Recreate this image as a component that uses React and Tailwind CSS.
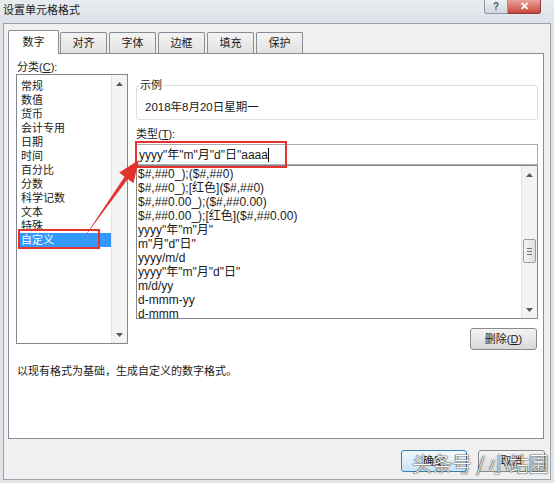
const categories = ['常规', '数值', '货币', '会计专用', '日期', '时间', '百分比', '分数', '科学记数', '文本', '特殊', '自定义']
const formats = [
  '$#,##0_);($#,##0)',
  '$#,##0_);[红色]($#,##0)',
  '$#,##0.00_);($#,##0.00)',
  '$#,##0.00_);[红色]($#,##0.00)',
  'yyyy"年"m"月"',
  'm"月"d"日"',
  'yyyy/m/d',
  'yyyy"年"m"月"d"日"',
  'm/d/yy',
  'd-mmm-yy',
  'd-mmm'
]
const tabs = ['数字', '对齐', '字体', '边框', '填充', '保护']

function Tri({ down }) {
  return (
    <svg width="7" height="4" viewBox="0 0 7 4">
      <path d={down ? 'M0 0 L7 0 L3.5 4Z' : 'M0 4 L3.5 0 L7 4Z'} fill="#5a5a5a" />
    </svg>
  )
}

function ScrollBar({ thumbTop }) {
  return (
    <div className="w-[16px] h-full bg-[#f3f3f3] border-l border-[#e3e3e3] flex flex-col">
      <div className="h-[17px] flex items-center justify-center"><Tri /></div>
      <div className="flex-1 flex flex-col items-center">
        {thumbTop != null && (
          <div
            className="w-[13px] h-[24px] rounded-[2px] border border-[#9b9b9b] bg-linear-to-r from-[#f4f4f4] to-[#dedede] flex flex-col items-center justify-center gap-[2px]"
            style={{ marginTop: thumbTop }}
          >
            <div className="w-[5px] h-px bg-[#777]" />
            <div className="w-[5px] h-px bg-[#777]" />
            <div className="w-[5px] h-px bg-[#777]" />
          </div>
        )}
      </div>
      <div className="h-[17px] flex items-center justify-center"><Tri down /></div>
    </div>
  )
}

function WinButton({ children, primary, className }) {
  const look = primary
    ? 'border-[#3c7fb1] bg-linear-to-b from-[#f2f9fd] to-[#c9e4f5]'
    : 'border-[#8a8a8a] bg-linear-to-b from-[#f4f4f4] to-[#d9d9d9]'
  return (
    <div className={`h-[22px] flex items-center justify-center rounded-[3px] border text-[11px] ${look} ${className}`}>
      {children}
    </div>
  )
}

export default function App() {
  return (
    <div className="relative w-[554px] h-[483px] overflow-hidden bg-[#dfe4e9] text-[#1a1a1a] font-['Liberation_Sans','Noto_Sans_CJK_SC',sans-serif]">
      {/* title bar */}
      <div className="h-[23px] flex justify-between bg-linear-to-b from-[#e9edf1] to-[#dce2e8]">
        <div className="pl-[3px] pt-[3px] text-[11px] leading-[14px]">设置单元格格式</div>
        <div className="flex pr-[13px] items-start">
          <div className="w-[24px] h-[14px] rounded-bl-[3px] border border-t-0 border-[#8c96a0] bg-linear-to-b from-[#eef1f4] to-[#cfd6dd] flex items-center justify-center text-[10px] leading-none text-[#555] font-bold">?</div>
          <div className="w-[33px] h-[14px] rounded-br-[3px] border border-t-0 border-l-0 border-[#8c3a3a] bg-linear-to-b from-[#e8a49a] to-[#c8453a] flex items-center justify-center text-[11px] leading-none text-white font-bold">✕</div>
        </div>
      </div>

      {/* dialog body */}
      <div className="ml-[3px] w-[548px] h-[457px] border border-[#9aa3ab] bg-[#f0f0f0]">
        {/* tabs */}
        <div className="pt-[6px] pl-[4px] flex items-end h-[29px]">
          {tabs.map((t, i) =>
            i === 0 ? (
              <div key={t} className="relative z-10 w-[51px] h-[24px] -mb-px bg-white border border-b-0 border-[#898c95] rounded-t-[2px] flex items-center justify-center text-[11px]">
                {t}
              </div>
            ) : (
              <div key={t} className={`w-[47px] h-[21px] border border-b-0 border-[#898c95] rounded-t-[2px] bg-linear-to-b from-[#f3f3f3] to-[#e2e2e2] flex items-center justify-center text-[11px] ${i === 1 ? 'ml-[1px]' : 'ml-[2px]'}`}>
                {t}
              </div>
            )
          )}
        </div>

        {/* tab page */}
        <div className="ml-[4px] w-[536px] h-[386px] border border-[#898c95] bg-white pt-[6px] pl-[7px]">
          <div className="ml-[1px] h-[14px] text-[11px] leading-[14px]">
            分类(<span className="underline">C</span>):
          </div>
          <div className="flex items-start">
            {/* category list */}
            <div className="w-[112px] h-[270px] border border-[#828790] flex">
              <div className="flex-1 pt-[4px]">
                {categories.map((c) => (
                  <div
                    key={c}
                    className={`ml-[1px] pl-[3px] h-[14px] leading-[14px] text-[11px] ${c === '自定义' ? 'bg-[#3399ff] text-white' : ''}`}
                  >
                    {c}
                  </div>
                ))}
              </div>
              <ScrollBar />
            </div>

            {/* right column */}
            <div className="ml-[8px] w-[402px] flex flex-col">
              <div className="relative mt-[11px] h-[35px] border border-[#d5dfe5] rounded-[3px] pt-[14px] pl-[8px]">
                <div className="absolute left-[2px] -top-[8px] bg-white px-[1px] text-[11px] leading-[14px]">示例</div>
                <div className="text-[11.5px] leading-[14px]">2018年8月20日星期一</div>
              </div>
              <div className="mt-[7px] h-[14px] text-[11px] leading-[14px]">
                类型(<span className="underline">T</span>):
              </div>
              <div className="mt-[3px] h-[21px] border border-[#abadb3] pl-[2px] flex items-center text-[12px]">
                yyyy"年"m"月"d"日"aaaa<span className="w-px h-[14px] bg-black" />
              </div>
              <div className="h-[154px] border border-[#828790] flex">
                <div className="flex-1 pl-[1px] pt-[1px]">
                  {formats.map((f) => (
                    <div key={f} className="h-[14px] leading-[14px] text-[12px] whitespace-nowrap">
                      {f}
                    </div>
                  ))}
                </div>
                <ScrollBar thumbTop={56} />
              </div>
              <div className="mt-[9px] flex justify-end pr-[1px]">
                <WinButton className="w-[67px]">
                  删除(<span className="underline">D</span>)
                </WinButton>
              </div>
            </div>
          </div>
          <div className="mt-[14px] ml-[1px] text-[11px] leading-[14px]">
            以现有格式为基础，生成自定义的数字格式。
          </div>
        </div>

        {/* bottom buttons */}
        <div className="mt-[11px] flex justify-end pr-[5px] gap-[11px]">
          <WinButton primary className="w-[66px]">确定</WinButton>
          <WinButton className="w-[67px]">取消</WinButton>
        </div>
      </div>

      {/* annotations */}
      <div className="absolute left-[18px] top-[229px] w-[82px] h-[20px] border-2 border-[#e5322d]" />
      <div className="absolute left-[135px] top-[141px] w-[152px] h-[27px] border-2 border-[#e5322d]" />
      <svg className="absolute left-0 top-0 pointer-events-none" width="554" height="483" viewBox="0 0 554 483">
        <path d="M83 239 L124.6 176.7 L119.2 172.6 L139 160 L133.4 183.2 L127.8 179.1 Z" fill="#e5322d" />
      </svg>

      {/* watermark */}
      <div className="absolute left-[412px] top-[452px] text-[20px] leading-[24px] text-white font-light whitespace-nowrap font-['Noto_Sans_CJK_SC',sans-serif] [text-shadow:0_0_1px_#333,0_0_1px_#333,0_0_2px_#555]">
        头条号 / 小站園
      </div>
    </div>
  )
}
